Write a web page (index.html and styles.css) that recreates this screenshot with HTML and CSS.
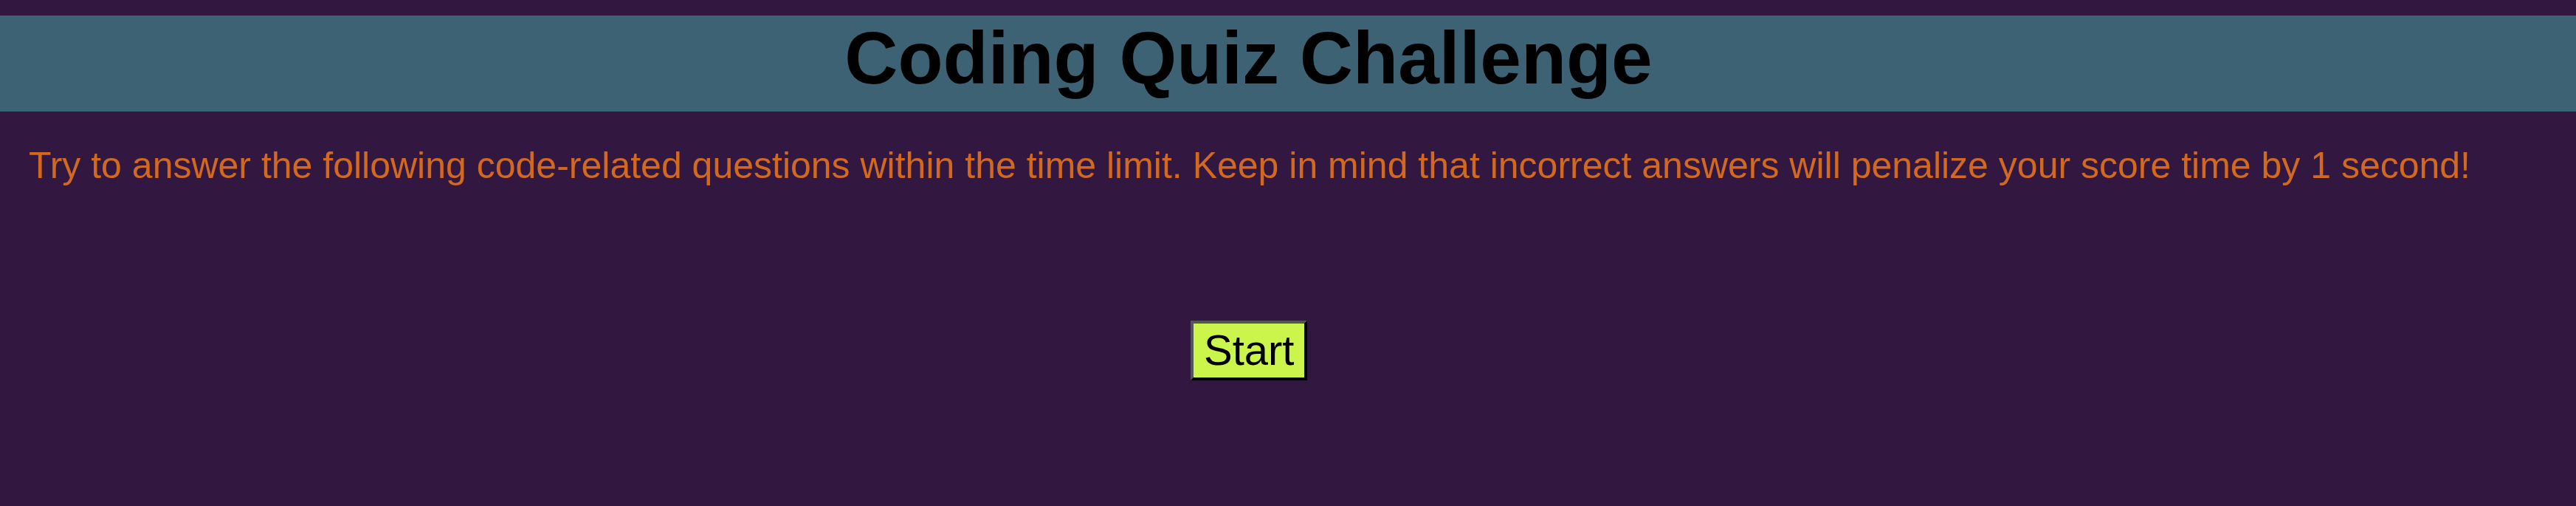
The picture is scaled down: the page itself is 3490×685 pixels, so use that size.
FILE: index.html
```html
<!DOCTYPE html>
<html lang="en">
<head>
<meta charset="utf-8">
<title>Coding Quiz Challenge</title>
<link rel="stylesheet" href="styles.css">
</head>
<body>
<header class="banner">
  <h1 class="title">Coding Quiz Challenge</h1>
</header>
<main class="intro">
  <p class="instructions">Try to answer the following code-related questions within the time limit. Keep in mind that incorrect answers will penalize your score time by 1 second!</p>
  <button class="start-btn" type="button">Start</button>
</main>
</body>
</html>
```
FILE: styles.css
```css
html, body {
  margin: 0;
  padding: 0;
  background: #321841;
  font-family: "Liberation Sans", Arial, sans-serif;
}
body {
  padding-top: 21px;
  min-height: 685px;
  box-sizing: border-box;
}
.banner {
  background: #3d6273;
  height: 130px;
  padding-right: 107px;
}
.title {
  margin: 0;
  font-size: 100px;
  font-weight: bold;
  line-height: 115px;
  text-align: center;
  color: #000;
}
.intro {
  padding: 45px 0 0 39px;
}
.instructions {
  margin: 0;
  font-size: 50px;
  line-height: 57.5px;
  color: #d2691e;
}
.start-btn {
  display: block;
  margin: 180px 0 0 1574px;
  padding: 3px 13px 4px 14px;
  font-family: "Liberation Sans", Arial, sans-serif;
  font-size: 58px;
  line-height: 66px;
  color: #000;
  background: #ccf54c;
  border-width: 4px;
  border-style: solid;
  border-color: #555 #000 #000 #555;
}
```
